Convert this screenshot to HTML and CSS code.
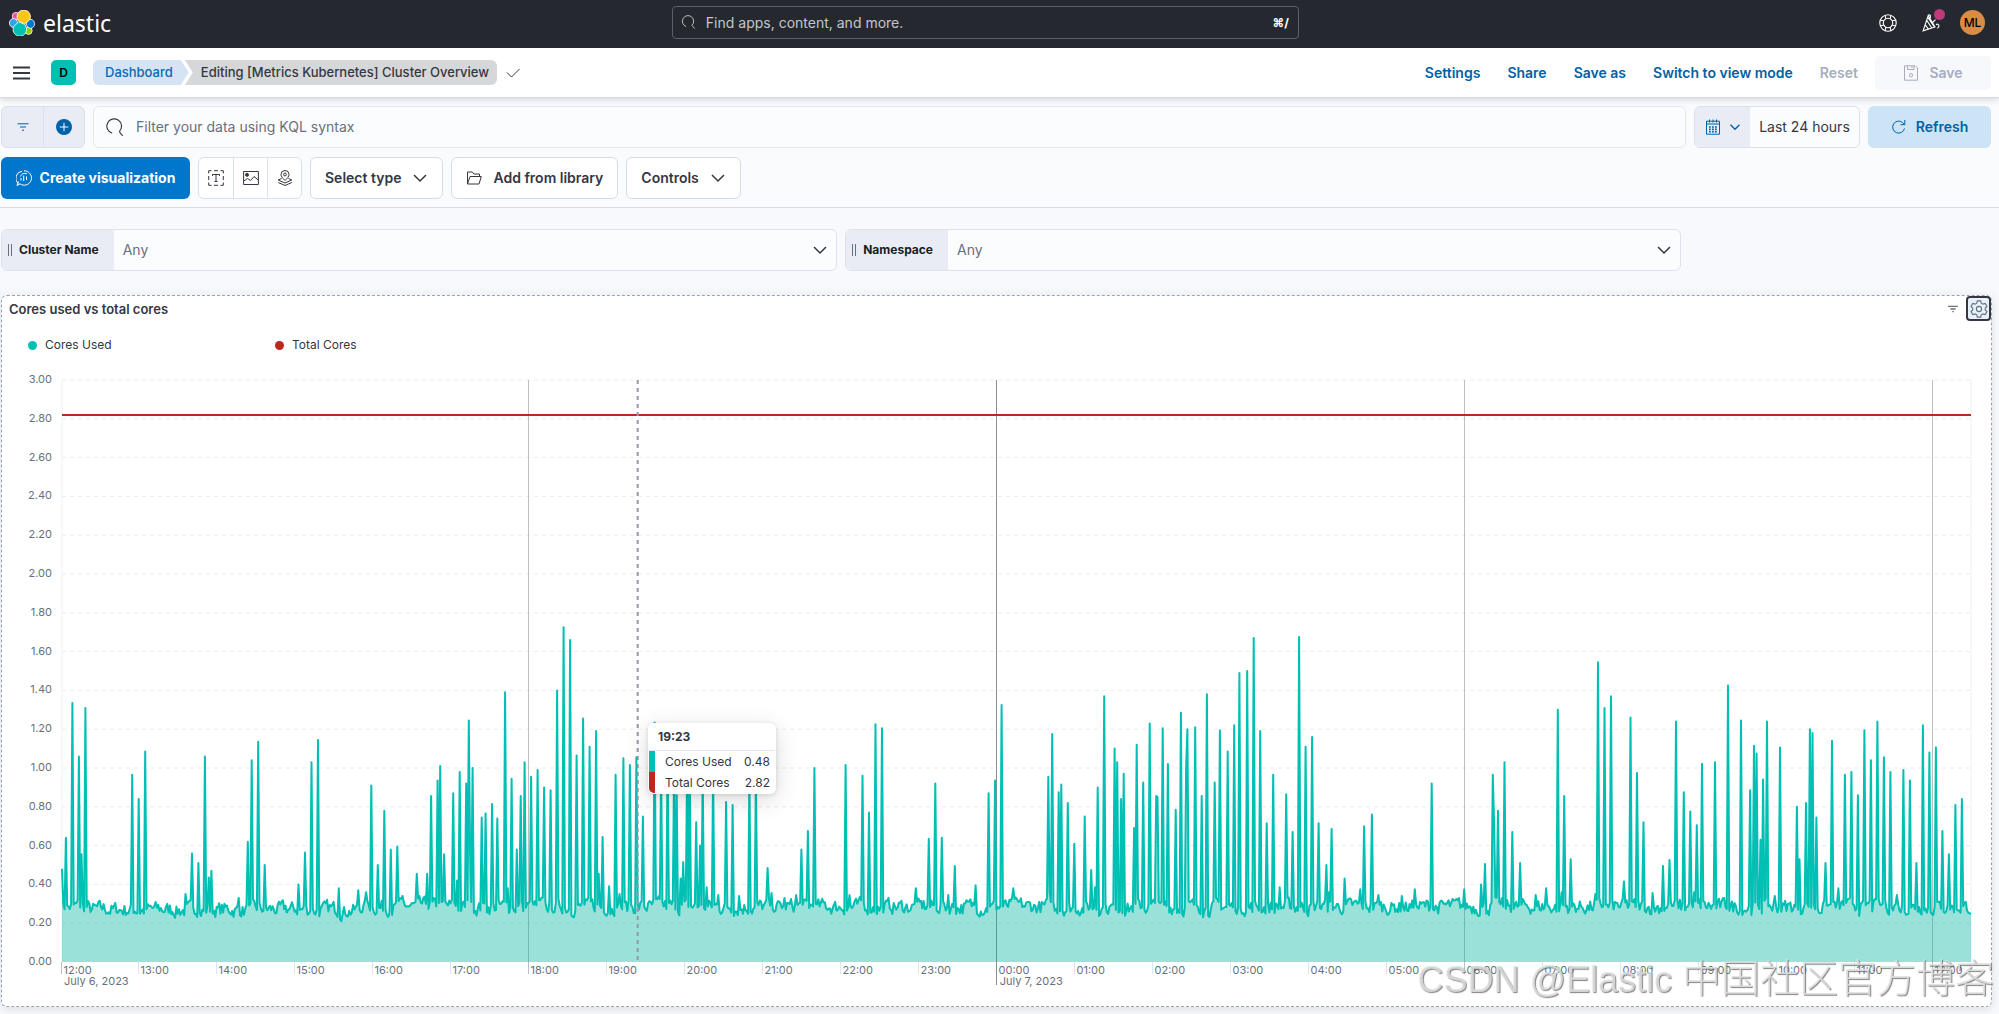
FILE: index.html
```html
<!DOCTYPE html>
<html lang="en">
<head>
<meta charset="UTF-8" />
<meta name="viewport" content="width=device-width, initial-scale=1" />
<title>Editing [Metrics Kubernetes] Cluster Overview - Elastic</title>
<link rel="stylesheet" href="styles.css">
</head>
<body>
  <header class="topbar">
    <a class="brand" href="#">
      <svg class="brand-mark" viewBox="0 0 32 32" aria-hidden="true">
        <circle cx="8.500" cy="7.500" r="4.500" fill="#f04e98" stroke="#fff" stroke-width="1" />
        <circle cx="24" cy="25.500" r="4.500" fill="#93c90e" stroke="#fff" stroke-width="1" />
        <ellipse cx="5.500" cy="16" rx="5" ry="5.500" fill="#36a2ef" stroke="#fff" stroke-width="1" />
        <ellipse cx="26.500" cy="17" rx="5" ry="5.500" fill="#07c" stroke="#fff" stroke-width="1" />
        <path d="M11 13 9.800 8.500A8.300 8.300 0 1 1 25.500 12L19 17.500z" fill="#fec514" stroke="#fff" stroke-width="1" />
        <path d="M12 14.500 20 18l1.500 4.500A8.300 8.300 0 1 1 6 20z" fill="#00bfb3" stroke="#fff" stroke-width="1" />
      </svg>
      <span>elastic</span>
    </a>
    <label class="global-search">
      <svg class="icon" viewBox="0 0 16 16"><path d="M5.500 12.300A6 6 0 1 1 11.600 11l3 3.500" /></svg>
      <input type="text" placeholder="Find apps, content, and more." aria-label="Find apps, content, and more" />
      <kbd>⌘/</kbd>
    </label>
    <div class="topbar-actions">
      <button type="button" aria-label="Help">
        <svg class="icon" viewBox="0 0 16 16"><circle cx="8" cy="8" r="7.300" /><circle cx="8" cy="8" r="4.200" /><path d="M5.500 1.200 6 4.200M10.500 1.200 10 4.200M6 11.800l-.5 3M10 11.800l.5 3M1.200 5.500l3 .5M1.200 10.500l3-.5M11.800 6l3-.5M11.800 10l3 .5" /></svg>
      </button>
      <button type="button" class="news" aria-label="What's new">
        <svg class="icon" viewBox="0 0 16 16"><path d="M5.500 1.500 1 15l10.500-3.500zM4.200 5.500l4.500 7M2.800 9.500l3 4.200M5.500 3.500l5.500 8M5.500 1.500c1-1.500 2.500-.5 2 1.500-.2 1-.8 2-1 2.500M12.500 9.500c1.500-1.200 2.800 0 2.500 1.500-.2 1-1 1.500-1.500 1.500M9 8l3-3" /></svg>
        <span class="news-dot"></span>
      </button>
      <button type="button" class="avatar" aria-label="Account menu">ML</button>
    </div>
  </header>

  <nav class="navbar">
    <button type="button" class="menu-btn" aria-label="Toggle navigation">
      <svg viewBox="0 0 18 14"><path d="M0 1.200h18M0 7h18M0 12.800h18" /></svg>
    </button>
    <span class="space-badge">D</span>
    <div class="crumbs">
      <a class="crumb crumb-first" href="#">Dashboard</a>
      <span class="crumb crumb-last">Editing [Metrics Kubernetes] Cluster Overview</span>
    </div>
    <svg class="icon saved-check" viewBox="0 0 16 16"><path d="m2 7.500 4.500 4.500L14.500 4" /></svg>
    <div class="nav-links">
      <a href="#">Settings</a>
      <a href="#">Share</a>
      <a href="#">Save as</a>
      <a href="#">Switch to view mode</a>
      <button type="button" class="link-btn" disabled>Reset</button>
      <button type="button" class="save-btn" disabled>
        <svg class="icon" viewBox="0 0 16 16"><path d="M1.500.8h10.800l2.200 2.200v12.200h-13zM4.500.8v3.700h6.500V.8M9 1v2" /><circle cx="8" cy="10.200" r="1.600" /></svg>
        Save
      </button>
    </div>
  </nav>

  <section class="query-area">
    <div class="query-row">
      <div class="filter-group">
        <button type="button" aria-label="Saved queries">
          <svg class="icon" viewBox="0 0 16 16"><path d="M2.500 4.800h11M5 8h6M7 11.200h2" /></svg>
        </button>
        <button type="button" aria-label="Add filter">
          <svg class="icon" viewBox="0 0 16 16"><circle cx="8" cy="8" r="8" fill="#0061a6" stroke="none" /><path d="M8 3.800v8.400M3.800 8h8.400" stroke="#fff" /></svg>
        </button>
      </div>
      <label class="kql">
        <svg class="icon" viewBox="0 0 16 16"><path d="M5.500 13.500A6.500 6.500 0 1 1 12.200 11.500M12 11.300l.5 2L15 15.800" /></svg>
        <input type="text" placeholder="Filter your data using KQL syntax" aria-label="Filter your data using KQL syntax" />
      </label>
      <div class="date-picker">
        <button type="button" class="date-quick" aria-label="Date quick select">
          <svg class="icon" viewBox="0 0 16 16"><path d="M1.500 2.200h13v13h-13zM1.500 5h13M4.500.5v3M8 .5v3M11.500.5v3" /><path stroke-width="1.600" stroke-dasharray="1.800 1.200" d="M4 8h8.500M4 10.300h8.500M4 12.600h8.500" /></svg>
          <svg class="icon small" viewBox="0 0 16 16"><path d="m2 5 6 6 6-6" stroke-width="1.800" /></svg>
        </button>
        <button type="button" class="date-range">Last 24 hours</button>
      </div>
      <button type="button" class="refresh-btn">
        <svg class="icon" viewBox="0 0 16 16"><path d="M13.500 9.500A6 6 0 1 1 11.500 3.500L13.500 5.500M13.800 1v4.700H9.500" /></svg>
        Refresh
      </button>
    </div>

    <div class="tool-row">
      <button type="button" class="create-btn">
        <svg class="icon" viewBox="0 0 16 16"><path d="M2 13.500A7.200 7.200 0 0 1 6 1.200M8 .8a7.200 7.200 0 1 1-4 13L1 15.500l1.500-4M5 10.500V8M7.700 11V5.500M10.500 10V6.500M4.500 6.500c1-3 4-4 6.500-2.500" /></svg>
        Create visualization
      </button>
      <div class="icon-group">
        <button type="button" aria-label="Text">
          <svg class="icon" viewBox="0 0 16 16"><path d="M.7 3.500V.7h2.800M6 .7h4M12.500.7h2.800v2.800M15.300 6v4M15.300 12.500v2.800h-2.800M10 15.300H6M3.500 15.300H.7v-2.800M.7 10V6M4.500 6V4.500h7V6M8 4.500v7M6.500 11.500h3" /></svg>
        </button>
        <button type="button" aria-label="Image">
          <svg class="icon" viewBox="0 0 16 16"><path d="M.6 1.500h14.800v13H.6zM.8 11 4.500 8.500l3 2 3.500-4 4.300 3.500" /><circle cx="4" cy="4.800" r="1.500" fill="currentColor" /></svg>
        </button>
        <button type="button" aria-label="Map">
          <svg class="icon" viewBox="0 0 16 16"><path d="M8 10.500C5.500 8 4 6.500 4 4.500a4 4 0 0 1 8 0c0 2-1.500 3.500-4 6zM4.500 8.500 1.200 10 8 13l6.800-3-3.300-1.500M1.200 12.500 8 15.500l6.800-3" /><circle cx="8" cy="4.500" r="1.400" /></svg>
        </button>
      </div>
      <button type="button" class="tool-btn">
        Select type
        <svg class="icon chevron" viewBox="0 0 16 16"><path d="m2 5 6 6 6-6" /></svg>
      </button>
      <button type="button" class="tool-btn">
        <svg class="icon" viewBox="0 0 16 16"><path d="M1.500 14V2h4.800l1.500 2h5.700v2.500M1.500 14 4 6.500h11.300L13 14z" /></svg>
        Add from library
      </button>
      <button type="button" class="tool-btn">
        Controls
        <svg class="icon chevron" viewBox="0 0 16 16"><path d="m2 5 6 6 6-6" /></svg>
      </button>
    </div>
  </section>

  <main class="dashboard">
    <div class="controls-row">
      <div class="control">
        <label for="clusterName"><span class="grip"></span>Cluster Name</label>
        <select id="clusterName"><option>Any</option></select>
        <svg class="icon chevron" viewBox="0 0 16 16"><path d="m2 5 6 6 6-6" /></svg>
      </div>
      <div class="control">
        <label for="namespace"><span class="grip"></span>Namespace</label>
        <select id="namespace"><option>Any</option></select>
        <svg class="icon chevron" viewBox="0 0 16 16"><path d="m2 5 6 6 6-6" /></svg>
      </div>
    </div>

    <article class="panel">
      <header class="panel-head">
        <h2>Cores used vs total cores</h2>
        <svg class="icon small" viewBox="0 0 16 16"><path d="M1.500 4.500h13M4.500 8h7M7 11.500h2" stroke-width="1.800" /></svg>
        <button type="button" class="gear-btn" aria-label="Panel options">
          <svg class="icon" viewBox="0 0 16 16"><path d="M6.500.8h3l.5 2 1.500.9 2-.6 1.600 2.600-1.500 1.500v1.600l1.500 1.500-1.600 2.600-2-.6-1.500.9-.5 2h-3l-.5-2-1.500-.9-2 .6L.9 10.300l1.500-1.500V7.200L.9 5.700l1.600-2.600 2 .6L6 2.800z" /><circle cx="8" cy="8" r="2.300" /></svg>
        </button>
      </header>
      <ul class="legend">
        <li><span class="dot dot-used"></span>Cores Used</li>
        <li><span class="dot dot-total"></span>Total Cores</li>
      </ul>
      <div class="chart">
        <svg id="chart" role="img" aria-label="Cores used vs total cores over the last 24 hours"></svg>
        <div class="tooltip" id="tooltip">
          <div class="tooltip-head">19:23</div>
          <div class="tooltip-row used"><span>Cores Used</span><span>0.48</span></div>
          <div class="tooltip-row total"><span>Total Cores</span><span>2.82</span></div>
        </div>
      </div>
    </article>
  </main>

  <div class="watermark">CSDN @Elastic <span lang="zh">中国社区官方博客</span></div>

  <script src="chart.js"></script>
</body>
</html>
```

FILE: styles.css
```css
/* Reset */
* {
  box-sizing: border-box;
}
body {
  margin: 0;
  min-height: 100vh;
  display: flex;
  flex-direction: column;
  background: #f8f9fd;
  color: #343741;
  font-family: Inter, "Noto Sans CJK SC", sans-serif;
  font-size: 14px;
  line-height: 20px;
}
button, input, select {
  font: inherit;
  color: inherit;
  margin: 0;
  padding: 0;
  border: none;
  outline: none;
  background: none;
}
button {
  display: flex;
  align-items: center;
  justify-content: center;
  cursor: pointer;
}
a {
  color: inherit;
  text-decoration: none;
}
.icon {
  width: 16px;
  height: 16px;
  flex: none;
  fill: none;
  stroke: currentColor;
  stroke-width: 1;
}
.icon.small {
  width: 12px;
  height: 12px;
}
.chevron {
  stroke-width: 1.5;
}

/* Top bar */
.topbar {
  display: grid;
  grid-template-columns: 57fr 627px 59fr;
  align-items: center;
  height: 48px;
  padding: 0 14px 3px 9px;
  background: #25282f;
  color: #fff;
}
.brand {
  display: flex;
  align-items: center;
  gap: 8px;
  font-family: "Noto Sans", sans-serif;
  font-size: 23px;
  line-height: 32px;
}
.brand-mark {
  width: 26px;
  height: 26px;
}
.global-search {
  display: flex;
  align-items: center;
  gap: 10px;
  height: 33px;
  padding: 0 9px 0 8px;
  border: 1px solid #5c5f66;
  border-radius: 4px;
  color: #c4c6ca;
}
.global-search .icon {
  width: 15px;
  height: 15px;
}
.global-search input {
  flex: 1;
  min-width: 0;
}
.global-search input::placeholder {
  color: #c4c6ca;
  opacity: 1;
}
.global-search kbd {
  font-family: Inter, "DejaVu Sans", sans-serif;
  font-size: 12px;
  font-weight: 700;
  color: #fff;
}
.topbar-actions {
  display: flex;
  justify-content: flex-end;
  align-items: center;
  gap: 25px;
}
.topbar-actions .icon {
  width: 18px;
  height: 18px;
}
.news {
  position: relative;
}
.news-dot {
  position: absolute;
  top: -5px;
  right: -5px;
  width: 11px;
  height: 11px;
  border-radius: 50%;
  background: #bd3b7a;
}
.avatar {
  width: 25px;
  height: 25px;
  margin-left: -5px;
  border-radius: 50%;
  background: #da8b45;
  color: #000;
  font-size: 12px;
  font-weight: 500;
}

/* Breadcrumb bar */
.navbar {
  position: relative;
  z-index: 1;
  display: flex;
  align-items: center;
  height: 50px;
  padding: 0 8px 0 13px;
  background: #fff;
  border-bottom: 1px solid #d3dae6;
  box-shadow: 0 2px 6px rgba(60, 64, 80, 0.18);
}
.menu-btn svg {
  width: 17px;
  height: 14px;
  stroke: #343741;
  stroke-width: 2;
}
.space-badge {
  width: 25px;
  margin-left: 21px;
  border-radius: 5px;
  background: #00bfb3;
  color: #000;
  font-size: 12px;
  font-weight: 600;
  line-height: 25px;
  text-align: center;
}
.crumbs {
  display: flex;
  margin-left: 17px;
  font-size: 13px;
  font-weight: 500;
  line-height: 25px;
}
.crumb-first {
  padding: 0 16px 0 12px;
  border-radius: 6px 0 0 6px;
  background: #d4e4f4;
  color: #0a69b5;
  clip-path: polygon(0 0, calc(100% - 8px) 0, 100% 50%, calc(100% - 8px) 100%, 0 100%);
}
.crumb-last {
  margin-left: -4px;
  padding: 0 8px 0 16px;
  border-radius: 0 6px 6px 0;
  background: #d6d7d9;
  clip-path: polygon(0 0, 100% 0, 100% 100%, 0 100%, 8px 50%);
}
.saved-check {
  margin-left: 8px;
}
.nav-links {
  display: flex;
  align-items: center;
  gap: 27px;
  margin-left: auto;
  font-weight: 600;
  color: #0061a6;
}
.link-btn, .save-btn {
  color: #a5adbf;
}
.save-btn {
  gap: 10px;
  width: 116px;
  height: 34px;
  margin-left: -10px;
  border-radius: 5px;
  background: #f7f8fb;
}

/* Query bar and toolbar */
.query-area {
  display: flex;
  flex-direction: column;
  gap: 9px;
  padding: 8px 8px 8px 1px;
  background: #fafbfd;
  border-bottom: 1px solid #d6dbea;
}
.query-row, .tool-row {
  display: flex;
  gap: 8px;
  height: 42px;
}
.filter-group, .date-picker, .icon-group {
  display: flex;
  border: 1px solid #dbe0ee;
  border-radius: 6px;
  overflow: hidden;
}
.filter-group {
  background: #e9ecf4;
  color: #0061a6;
}
.filter-group button {
  width: 41px;
}
.filter-group button + button, .icon-group button + button {
  border-left: 1px solid #dbe0ee;
}
.kql {
  flex: 1;
  display: flex;
  align-items: center;
  gap: 12px;
  padding: 0 12px;
  border: 1px solid #e3e7f1;
  border-radius: 6px;
  background: #fbfcfe;
}
.kql .icon {
  width: 18px;
  height: 18px;
}
.kql input {
  flex: 1;
}
.kql input::placeholder {
  color: #69707d;
  opacity: 1;
}
.date-picker {
  width: 166px;
  background: #fbfcfe;
}
.date-quick {
  gap: 8px;
  width: 55px;
  background: #e9ecf4;
  color: #0061a6;
}
.date-range {
  flex: 1;
}
.refresh-btn {
  gap: 9px;
  width: 123px;
  border-radius: 6px;
  background: #cce4f5;
  color: #0061a6;
  font-weight: 600;
}
.create-btn {
  gap: 8px;
  width: 189px;
  border-radius: 6px;
  background: #0077cc;
  color: #fff;
  font-weight: 700;
}
.icon-group {
  background: #fff;
}
.icon-group button {
  width: 34px;
}
.tool-btn {
  gap: 11px;
  padding: 0 14px;
  border: 1px solid #d6dbea;
  border-radius: 6px;
  background: #fff;
  font-weight: 600;
}

/* Dashboard */
.dashboard {
  flex: 1;
  display: flex;
  flex-direction: column;
  gap: 24px;
  padding: 21px 7px 7px 1px;
}
.controls-row {
  display: flex;
  gap: 8px;
}
.control {
  position: relative;
  display: flex;
  width: 42%;
  height: 42px;
  border: 1px solid #dde2ef;
  border-radius: 6px;
  background: #fbfcfe;
  overflow: hidden;
}
.control label {
  display: flex;
  align-items: center;
  gap: 7px;
  padding: 0 15px 0 6px;
  background: #e9ecf4;
  color: #1a1c21;
  font-size: 12px;
  font-weight: 700;
}
.grip {
  width: 4px;
  height: 12px;
  border: solid #69707d;
  border-width: 0 1px;
}
.control select {
  flex: 1;
  padding: 0 9px;
  appearance: none;
  color: #69707d;
}
.control .chevron {
  position: absolute;
  top: 12px;
  right: 8px;
  pointer-events: none;
}
.panel {
  flex: 1;
  display: flex;
  flex-direction: column;
  border: 1px dashed #98a2b3;
  border-radius: 6px;
  background: #fff;
  box-shadow: 0 2px 10px rgba(60, 64, 80, 0.15);
}
.panel-head {
  display: flex;
  align-items: center;
  gap: 7px;
  height: 25px;
  padding-left: 7px;
  color: #69707d;
}
.panel-head h2 {
  flex: 1;
  margin: 0;
  color: #343741;
  font-size: 13px;
  font-weight: 600;
}
.gear-btn {
  width: 25px;
  height: 25px;
  border: 2px solid #343741;
  border-radius: 4px;
  background: #e6f1fa;
}
.gear-btn .icon {
  width: 18px;
  height: 18px;
}
.legend {
  display: flex;
  margin: 14px 0 0;
  padding: 0 0 0 26px;
  list-style: none;
  font-size: 12px;
}
.legend li {
  display: flex;
  align-items: center;
  gap: 8px;
  width: 247px;
}
.dot {
  width: 9px;
  height: 9px;
  border-radius: 50%;
}
.dot-used {
  background: #00bfb3;
}
.dot-total {
  background: #bd271e;
}

/* Chart */
.chart {
  position: relative;
  flex: 1;
  min-height: 320px;
}
.chart svg {
  position: absolute;
  width: 100%;
  height: 100%;
}
.chart text {
  fill: #69707d;
  font-size: 11px;
}
.grid-line {
  stroke: #e9ecf1;
  stroke-dasharray: 4 4;
}
.tick {
  stroke: #dfe3ea;
}
.frame {
  stroke: #eef0f6;
}
.major {
  stroke: #bcbec2;
}
.day {
  stroke: #8b8d92;
}
.area {
  fill: #00b4a0;
  fill-opacity: 0.4;
}
.line-used, .line-total {
  fill: none;
  stroke: #00bfb3;
  stroke-width: 2;
  stroke-linejoin: round;
}
.line-total {
  stroke: #bd271e;
}
.cursor {
  stroke: #9699a3;
  stroke-width: 2;
  stroke-dasharray: 4 4;
}
.tooltip {
  position: absolute;
  width: 128px;
  padding: 1px;
  border-radius: 6px;
  background: #fff;
  box-shadow: 0 6px 24px rgba(0, 0, 0, 0.14), 0 1px 5px rgba(0, 0, 0, 0.12);
  font-size: 12px;
  overflow: hidden;
}
.tooltip-head {
  padding: 3px 9px;
  border-bottom: 1px solid #e3e6ee;
  font-weight: 700;
}
.tooltip-row {
  display: flex;
  justify-content: space-between;
  padding: 0 5px 0 10px;
  border-left: 6px solid #00bfb3;
  line-height: 21px;
}
.tooltip-row.total {
  border-color: #bd271e;
  border-radius: 0 0 0 5px;
}

.watermark {
  position: fixed;
  right: 5px;
  bottom: 10px;
  color: rgba(225, 225, 225, 0.85);
  font-family: "Liberation Sans", "Noto Sans CJK SC", sans-serif;
  font-size: 36px;
  font-weight: 300;
  line-height: 48px;
  text-shadow: 1px 1px 1px rgba(90, 90, 90, 0.75);
  white-space: nowrap;
  pointer-events: none;
}
.watermark span {
  font-size: 39px;
}
```

FILE: chart.js
```js
// Peaks above the idle load: [minutes since 12:00, cores]
const PEAKS = [
  [0, .48], [3, .64], [8, 1.335], [13, 1.06], [15, .555], [18, 1.31], [54, .965], [59, .84], [64, 1.085],
  [95, .35], [100, .56], [105, .51], [110, 1.06], [113, .435], [115, .47], [136, .33], [143, .62],
  [146, 1.04], [151, 1.135], [156, .5], [182, .4], [187, .565], [192, 1.03], [197, 1.145], [213, .38],
  [228, .37], [234, .36], [238, .91], [243, .5], [248, .78], [253, .58], [258, .595], [262, .34],
  [273, .455], [281, .455], [284, .855], [289, .935], [291, 1.01], [294, .555], [301, .87], [304, .42],
  [306, .98], [311, .92], [313, 1.245], [314, .57], [316, 1], [323, .745], [326, .765], [331, .815],
  [335, .74], [341, 1.39], [343, .38], [346, .945], [350, .58], [353, .855], [356, 1.03], [361, .955],
  [366, .99], [371, .9], [376, .885], [381, 1.4], [386, 1.725], [391, 1.66], [396, 1.065], [401, 1.255],
  [406, 1.11], [411, 1.19], [413, .455], [416, .645], [421, .39], [426, .965], [429, .35], [432, 1.05],
  [437, 1.015], [442, 1.055], [447, .75], [456, 1.235], [461, .97], [466, 1.05], [471, 1], [473, .86],
  [476, .43], [478, .515], [481, 1], [483, 1], [488, .72], [491, .6], [493, .95], [496, .385],
  [501, .95], [505, .345], [511, .825], [516, .81], [521, .34], [529, .95], [534, .95], [543, .485],
  [546, .355], [556, .33], [565, .345], [569, .58], [574, .675], [579, 1], [603, 1.015], [606, .345],
  [616, .96], [621, .77], [626, 1.225], [631, 1.205], [657, .38], [667, .635], [672, .92], [677, .64],
  [682, .345], [687, .495], [703, .395], [713, .87], [718, .935], [723, 1.325], [732, .38], [759, .955],
  [760, .36], [762, 1.175], [767, .875], [769, .915], [774, .82], [779, .61], [787, .75], [792, .475],
  [795, .385], [797, .9], [802, 1.37], [810, 1.1], [812, 1.03], [815, .84], [817, .97], [825, .69],
  [827, 1.12], [832, .925], [837, 1.23], [842, .855], [843, .85], [847, 1.205], [851, 1.02], [857, .785],
  [861, 1.285], [865, 1], [866, 1.2], [872, 1.21], [877, .855], [881, 1.38], [887, .925], [891, 1.195],
  [897, 1.085], [902, 1.22], [906, 1.49], [912, 1.5], [917, 1.67], [922, 1.19], [927, .715], [932, .965],
  [937, .385], [942, .865], [947, .67], [952, 1.675], [957, 1.11], [962, 1.16], [967, .715], [973, .5],
  [975, .36], [977, .685], [987, .43], [999, .375], [1002, .7], [1008, .76], [1013, .345], [1031, .34],
  [1041, .375], [1054, .92], [1079, .375], [1092, .4], [1095, .505], [1101, .965], [1102, .71],
  [1105, .78], [1110, 1.03], [1116, .67], [1122, .51], [1134, .345], [1142, .38], [1151, 1.3],
  [1154, .36], [1156, .855], [1161, .53], [1180, .35], [1182, 1.545], [1187, 1.31], [1192, 1.37],
  [1202, .415], [1207, 1.26], [1212, .975], [1217, .72], [1224, .355], [1232, .495], [1237, .525],
  [1242, 1.24], [1248, .875], [1253, .775], [1256, .36], [1258, .705], [1262, 1.02], [1272, 1.03],
  [1282, 1.425], [1292, 1.245], [1299, .885], [1302, 1.115], [1304, 1.075], [1307, .63], [1309, .94],
  [1312, 1.24], [1318, .34], [1322, 1.105], [1335, .8], [1337, .53], [1342, .82], [1345, 1.2],
  [1347, 1.18], [1350, .745], [1357, .51], [1362, 1.14], [1367, .38], [1372, .965], [1377, .98],
  [1382, .86], [1387, 1.195], [1392, 1.04], [1397, 1.24], [1402, 1.055], [1407, .98], [1412, .345],
  [1417, .99], [1422, .935], [1427, .51], [1432, 1.22], [1437, 1.08], [1442, 1.105], [1447, .675],
  [1452, .555], [1457, .81], [1462, .84]
];
const MINUTES = 1469;
const TOTAL_CORES = 2.82;
const CURSOR_MINUTE = 443;
const MARGIN = { top: 25, right: 20, bottom: 44, left: 60 };

const svg = document.getElementById("chart");
const tooltip = document.getElementById("tooltip");

// Idle load with a small repeatable jitter
function buildSeries() {
  const peaks = new Map(PEAKS);
  const series = [];
  let seed = 7;
  let drift = 0;
  for (let m = 0; m <= MINUTES; m++) {
    seed = (seed * 16807) % 2147483647;
    const rnd = seed / 2147483647 - 0.5;
    drift = drift * 0.7 + rnd * 0.035;
    const idle = (m > 20 && m < 230 ? 0.27 : 0.285) + drift + rnd * 0.035;
    series.push(peaks.has(m) ? peaks.get(m) : idle);
  }
  return series;
}

const series = buildSeries();

function line(cls, x1, y1, x2, y2) {
  return `<line class="${cls}" x1="${x1}" y1="${y1}" x2="${x2}" y2="${y2}" />`;
}

function draw() {
  const width = svg.clientWidth;
  const height = svg.clientHeight;
  const right = width - MARGIN.right;
  const bottom = height - MARGIN.bottom;
  const x = m => MARGIN.left + (m / MINUTES) * (right - MARGIN.left);
  const y = v => bottom - (v / 3) * (bottom - MARGIN.top);
  let out = "";

  // Horizontal grid and y labels
  for (let i = 0; i <= 15; i++) {
    const v = i * 0.2;
    if (i > 0) out += line("grid-line", MARGIN.left, y(v), right, y(v));
    out += `<text x="${MARGIN.left - 10}" y="${y(v) + 3}" text-anchor="end">${v.toFixed(2)}</text>`;
  }
  out += line("frame", MARGIN.left, MARGIN.top, MARGIN.left, bottom);
  out += line("frame", right, MARGIN.top, right, bottom);

  // Hour ticks, a full line every six hours
  for (let h = 0; h <= 24; h++) {
    const px = Math.floor(x(h * 60)) - 0.5;
    const label = String((12 + h) % 24).padStart(2, "0") + ":00";
    if (h === 12) out += line("day", px, MARGIN.top, px, bottom + 23);
    else if (h > 0 && h % 6 === 0) out += line("major", px, MARGIN.top, px, bottom + 12);
    else out += line(h === 0 ? "major" : "tick", px, bottom, px, bottom + 12);
    out += `<text x="${px + 2}" y="${bottom + 12}">${label}</text>`;
  }
  out += `<text x="${x(0) + 2}" y="${bottom + 23}">July 6, 2023</text>`;
  out += `<text x="${x(720) + 2}" y="${bottom + 23}">July 7, 2023</text>`;

  // Series
  const points = series.map((v, m) => `${x(m).toFixed(1)},${y(v).toFixed(1)}`).join(" ");
  out += `<polygon class="area" points="${x(0)},${bottom} ${points} ${right},${bottom}" />`;
  out += `<polyline class="line-used" points="${points}" />`;
  out += line("line-total", MARGIN.left, y(TOTAL_CORES), right, y(TOTAL_CORES));
  out += line("cursor", x(CURSOR_MINUTE), MARGIN.top, x(CURSOR_MINUTE), bottom);

  svg.innerHTML = out;
  tooltip.style.left = `${Math.round(x(CURSOR_MINUTE)) + 10}px`;
  tooltip.style.top = `${Math.round(y(1.23))}px`;
}

window.addEventListener("resize", draw);
draw();
```
